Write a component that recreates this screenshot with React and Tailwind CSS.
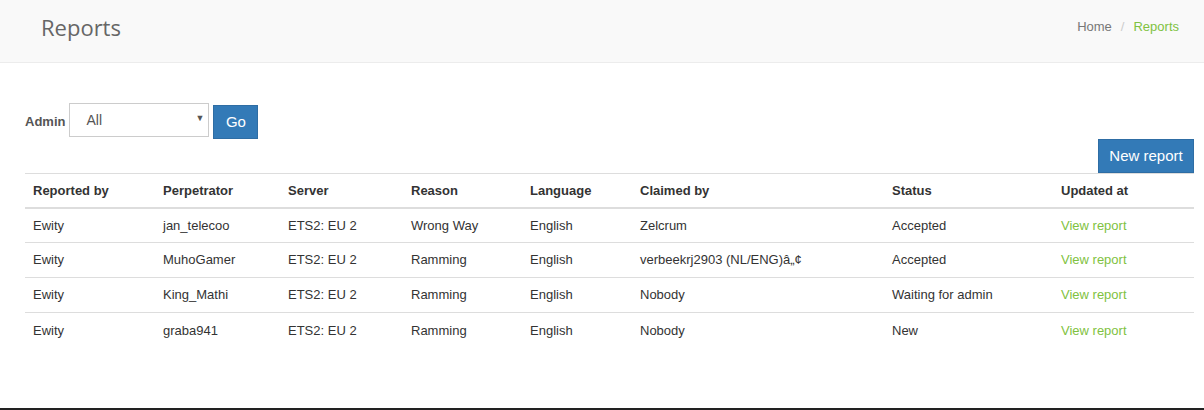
export default function App() {
  const rows = [
    ["Ewity", "jan_telecoo", "ETS2: EU 2", "Wrong Way", "English", "Zelcrum", "Accepted"],
    ["Ewity", "MuhoGamer", "ETS2: EU 2", "Ramming", "English", "verbeekrj2903 (NL/ENG)â„¢", "Accepted"],
    ["Ewity", "King_Mathi", "ETS2: EU 2", "Ramming", "English", "Nobody", "Waiting for admin"],
    ["Ewity", "graba941", "ETS2: EU 2", "Ramming", "English", "Nobody", "New"],
  ];
  const widths = ["w-[130px]", "w-[125px]", "w-[123px]", "w-[119px]", "w-[110px]", "w-[252px]", "w-[169px]", ""];
  const heads = ["Reported by", "Perpetrator", "Server", "Reason", "Language", "Claimed by", "Status", "Updated at"];
  return (
    <div className="w-[1204px] h-[410px] bg-white flex flex-col text-[13px] text-[#333]" style={{ fontFamily: '"Liberation Sans", Arial, sans-serif' }}>
      <div className="h-[63px] bg-[#f9f9f9] border-b border-[#ececec] flex items-center justify-between pl-[41px] pr-[25px]">
        <h1 className="text-[22px] text-[#666] leading-none -mt-[8px]" style={{ fontFamily: '"Open Sans", sans-serif' }}>Reports</h1>
        <div className="flex items-center -mt-[8px]">
          <span className="text-[#777]">Home</span>
          <span className="text-[#ccc] px-[9px]">/</span>
          <span className="text-[#7fc241]">Reports</span>
        </div>
      </div>
      <div className="flex-1 pl-[25px] pr-[10px] pt-[40px] flex flex-col">
        <div className="flex items-start">
          <label className="font-bold text-[#555] mt-[9px] mr-[4px]">Admin</label>
          <div className="relative w-[140px] h-[34px] border border-[#ccc] bg-white flex items-center pl-[16px] text-[#555] text-[14px]">
            All
            <span className="absolute right-[4px] top-[8px] text-[9px] text-[#555]">▼</span>
          </div>
          <button className="ml-[4px] mt-[2px] w-[45px] h-[34px] bg-[#337ab7] border border-[#2e6da4] text-white text-[15px]">Go</button>
        </div>
        <div className="flex justify-end">
          <button className="w-[96px] h-[34px] bg-[#337ab7] border border-[#2e6da4] text-white text-[15px]">New report</button>
        </div>
        <table className="w-full border-collapse">
          <thead>
            <tr className="border-t border-b-2 border-[#ddd]">
              {heads.map((h, i) => (
                <th key={i} className={`${widths[i]} h-[34px] px-[8px] text-left font-bold align-middle`}>{h}</th>
              ))}
            </tr>
          </thead>
          <tbody>
            {rows.map((r, ri) => (
              <tr key={ri} className={ri < rows.length - 1 ? "border-b border-[#ddd]" : ""}>
                {r.map((c, ci) => (
                  <td key={ci} className="h-[35px] px-[8px] align-middle">{c}</td>
                ))}
                <td className="h-[35px] px-[8px] align-middle text-[#7fc241]">View report</td>
              </tr>
            ))}
          </tbody>
        </table>
      </div>
      <div className="h-[2px] bg-[#222]" />
    </div>
  );
}
